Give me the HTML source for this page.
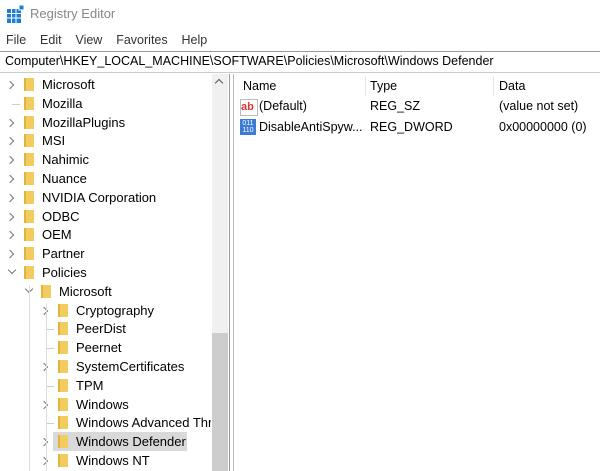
<!DOCTYPE html><html><head><style>
body{margin:0;width:600px;height:471px;background:#fff;font-family:"Liberation Sans",sans-serif;font-size:13px;color:#000;position:relative;overflow:hidden}
.a{position:absolute;white-space:nowrap}
.s{font-size:12.5px}
.f{position:absolute;width:8px;height:13px;background:#f3cc5f;border-left:2px solid #e3b33c}
.ar{position:absolute;width:5px;height:5px;border-right:1px solid #777;border-bottom:1px solid #777}
.r{transform:rotate(-45deg)}.d{transform:rotate(45deg)}
</style></head><body>
<svg class="a" style="left:7px;top:5px" width="18" height="18"><rect x="0" y="4" width="14" height="14" fill="#1e7fd0"/><g stroke="#fff" stroke-width="1"><line x1="0" y1="8.5" x2="14" y2="8.5"/><line x1="0" y1="13" x2="14" y2="13"/><line x1="4.5" y1="4" x2="4.5" y2="18"/><line x1="9" y1="4" x2="9" y2="18"/></g><rect x="12" y="0" width="5" height="5" fill="#1e7fd0" stroke="#fff"/></svg>
<div class="a" style="left:30px;top:6px;font-size:13px;color:#888">Registry Editor</div>
<div class="a s" style="left:6px;top:33px;color:#333">File&nbsp;&nbsp;&nbsp; Edit&nbsp;&nbsp;&nbsp; View&nbsp;&nbsp;&nbsp; Favorites&nbsp;&nbsp;&nbsp; Help</div>
<div class="a" style="left:0;top:51px;width:600px;height:20px;border-top:1px solid #999;border-bottom:1px solid #ccc"></div>
<div class="a s" style="left:5px;top:54px">Computer\HKEY_LOCAL_MACHINE\SOFTWARE\Policies\Microsoft\Windows Defender</div>
<div class="a" style="left:212px;top:74px;width:16px;height:397px;background:#f0f0f0"></div>
<div class="a" style="left:212px;top:333px;width:16px;height:138px;background:#cdcdcd"></div>
<div class="a" style="left:216px;top:80px;width:5px;height:5px;border-left:1.5px solid #555;border-top:1.5px solid #555;transform:rotate(45deg)"></div>
<div class="a" style="left:229px;top:74px;width:1px;height:397px;background:#999"></div>
<div class="a" style="left:233px;top:74px;width:1px;height:397px;background:#bbb"></div>
<div class="a" style="left:365px;top:76px;width:1px;height:20px;background:#e5e5e5"></div>
<div class="a" style="left:493px;top:76px;width:1px;height:20px;background:#e5e5e5"></div>
<div class="a s" style="left:243px;top:79px">Name</div><div class="a s" style="left:370px;top:79px">Type</div><div class="a s" style="left:499px;top:79px">Data</div>
<div class="a" style="left:240px;top:99px;width:16px;height:15px;border:1px solid #bbb;background:#fff;font-size:11px;color:#d33;font-weight:bold;line-height:14px">ab</div>
<div class="a s" style="left:259px;top:99px">(Default)</div><div class="a s" style="left:370px;top:99px">REG_SZ</div><div class="a s" style="left:499px;top:99px">(value not set)</div>
<div class="a" style="left:240px;top:119px;width:16px;height:16px;background:#3b7bd5;color:#fff;font-size:7px;line-height:7px;text-align:center;padding-top:1px;box-sizing:border-box">011<br>110</div>
<div class="a s" style="left:259px;top:120px">DisableAntiSpyw...</div><div class="a s" style="left:370px;top:120px">REG_DWORD</div><div class="a s" style="left:499px;top:120px">0x00000000 (0)</div>
<div class="a" style="left:53px;top:432px;width:134px;height:19px;background:#d9d9d9"></div>
<div id="t"></div>
<script>
var rows=[[0,'Microsoft','r'],[0,'Mozilla',''],[0,'MozillaPlugins','r'],[0,'MSI','r'],[0,'Nahimic','r'],[0,'Nuance','r'],[0,'NVIDIA Corporation','r'],[0,'ODBC','r'],[0,'OEM','r'],[0,'Partner','r'],[0,'Policies','d'],[1,'Microsoft','d'],[2,'Cryptography','r'],[2,'PeerDist',''],[2,'Peernet',''],[2,'SystemCertificates','r'],[2,'TPM',''],[2,'Windows','r'],[2,'Windows Advanced Threat',''],[2,'Windows Defender','r'],[2,'Windows NT','r']];
var h='';rows.forEach(function(r,i){var y=76+i*18.8,x=r[0]*17;
if(r[2]=='r')h+='<div class="ar r" style="left:'+(7+x)+'px;top:'+(y+6)+'px"></div>';
else if(r[2]=='d')h+='<div class="ar d" style="left:'+(9+x)+'px;top:'+(y+3)+'px"></div>';
else h+='<div class="a" style="left:'+(12+x)+'px;top:'+(y+9)+'px;width:8px;height:1px;background:#ccc"></div>';
h+='<div class="f" style="left:'+(24+x)+'px;top:'+(y+2)+'px"></div>';
h+='<div class="a" style="left:'+(42+x)+'px;top:'+(y+1)+'px;width:'+(211-x-42)+'px;overflow:hidden">'+r[1]+'</div>';});
h+='<div class="a" style="left:29px;top:285px;width:1px;height:186px;background:#ddd"></div>';
h+='<div class="a" style="left:46px;top:303px;width:1px;height:168px;background:#ddd"></div>';
document.getElementById('t').innerHTML=h;
</script>
</body></html>
